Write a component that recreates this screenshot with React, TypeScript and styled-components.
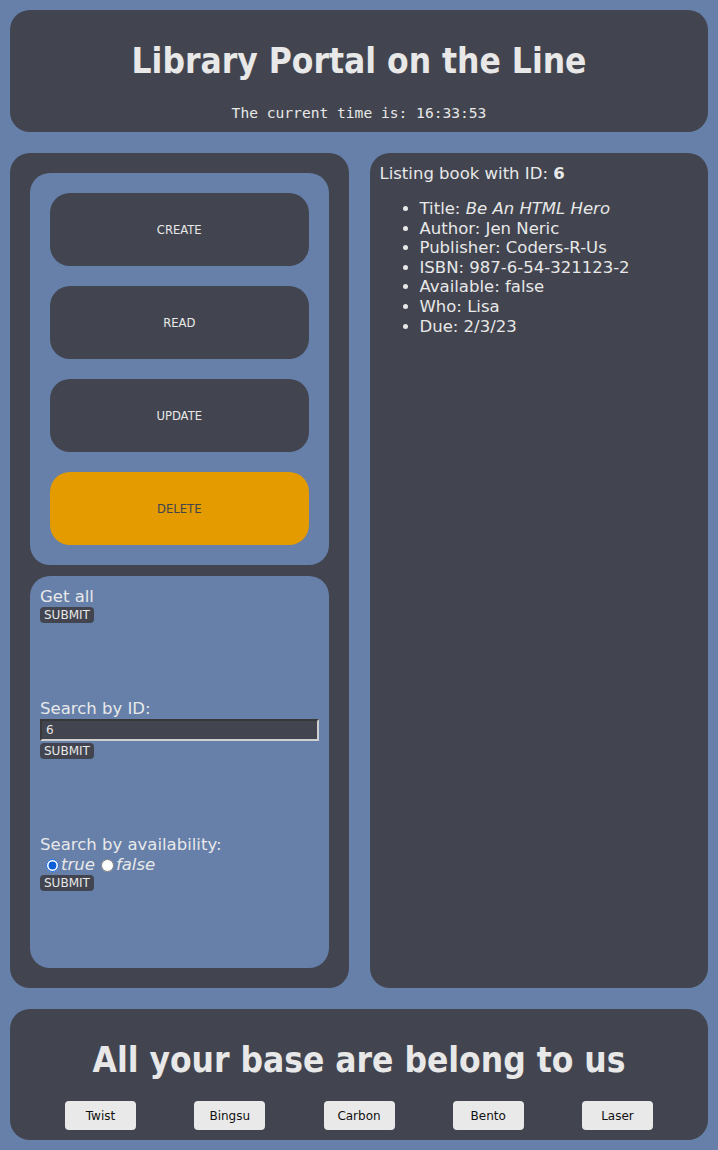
import React from 'react';
import styled, { createGlobalStyle } from 'styled-components';

const GlobalStyle = createGlobalStyle`
  html, body {
    margin: 0;
    padding: 0;
    background: #6680aa;
  }
  body {
    font-family: "DejaVu Sans", Verdana, sans-serif;
    color: #e8e8e8;
  }
`;

const Page = styled.div`
  display: flex;
  flex-direction: column;
  gap: 21px;
  padding: 10px;
  min-height: 1150px;
  box-sizing: border-box;
`;

const Banner = styled.header`
  background: #42454f;
  border-radius: 20px;
  padding: 23px 20px 10px;
  text-align: center;
`;

const BigTitle = styled.h1`
  margin: 0;
  font-family: "DejaVu Sans Condensed", "DejaVu Sans", sans-serif;
  font-size: 35px;
  font-weight: bold;
  line-height: 56px;
`;

const Clock = styled.p`
  margin: 15px 0 0;
  font-family: "DejaVu Sans Mono", "Liberation Mono", monospace;
  font-size: 14.6px;
  line-height: 18px;
`;

const Main = styled.main`
  display: grid;
  grid-template-columns: 1fr 1fr;
  gap: 21px;
`;

const Panel = styled.section<{ $tight?: boolean }>`
  background: #42454f;
  border-radius: 20px;
  padding: ${p => (p.$tight ? '11px 10px' : '20px')};
  display: flex;
  flex-direction: column;
  gap: ${p => (p.$tight ? '0' : '11px')};
`;

const ActionBox = styled.div`
  background: #6680aa;
  border-radius: 20px;
  padding: 20px;
  display: flex;
  flex-direction: column;
  gap: 20px;
`;

const ActionButton = styled.button<{ $danger?: boolean }>`
  height: 73px;
  border: none;
  border-radius: 20px;
  background: ${p => (p.$danger ? '#e39b00' : '#42454f')};
  color: ${p => (p.$danger ? '#42454f' : '#e8e8e8')};
  font-family: inherit;
  font-size: 11.6px;
  cursor: pointer;
`;

const FormBox = styled.div`
  background: #6680aa;
  border-radius: 20px;
  padding: 11px 10px 10px;
  height: 392px;
  box-sizing: border-box;
  display: flex;
  flex-direction: column;
`;

const Form = styled.form`
  display: flex;
  flex-direction: column;
  align-items: flex-start;
  margin-bottom: 76px;
`;

const Label = styled.label`
  font-size: 16.5px;
  line-height: 20px;
`;

const SmallSubmit = styled.button`
  border: none;
  border-radius: 4px;
  background: #42454f;
  color: #e8e8e8;
  font-family: inherit;
  font-size: 12px;
  line-height: 14px;
  padding: 1px 4px;
  cursor: pointer;
`;

const IdInput = styled.input`
  width: 100%;
  box-sizing: border-box;
  height: 22px;
  margin: 0 0 2px;
  background: #42454f;
  color: #e8e8e8;
  border: 2px inset #d0d0d0;
  border-top-color: #8c8c8c;
  border-left-color: #8c8c8c;
  font-family: inherit;
  font-size: 12px;
  padding: 1px 4px;
`;

const RadioRow = styled.div`
  display: flex;
  align-items: center;
  font-size: 16.5px;
  line-height: 20px;
  font-style: italic;
`;

const Radio = styled.input`
  margin: 0 2px 0 6px;
  width: 13px;
  height: 13px;
  accent-color: #0b5fd6;
`;

const Heading = styled.div`
  font-size: 16.5px;
  line-height: 20px;
`;

const Details = styled.ul`
  margin: 15px 0 0;
  padding-left: 40px;
  font-size: 16.5px;
  line-height: 19.6px;
`;

const Footer = styled.footer`
  background: #42454f;
  border-radius: 20px;
  padding: 23px 0 10px;
  text-align: center;
`;

const ThemeRow = styled.div`
  display: flex;
  justify-content: space-between;
  padding: 0 55px;
  margin-top: 13px;
`;

const ThemeButton = styled.button`
  width: 71px;
  height: 29px;
  border: none;
  border-radius: 4px;
  background: #e9e9e9;
  color: #111;
  font-family: inherit;
  font-size: 12px;
  cursor: pointer;
`;

const themes = ['Twist', 'Bingsu', 'Carbon', 'Bento', 'Laser'];

export default function App() {
  const [avail, setAvail] = React.useState('true');

  return (
    <>
      <GlobalStyle />
      <Page>
        <Banner>
          <BigTitle>Library Portal on the Line</BigTitle>
          <Clock>The current time is: 16:33:53</Clock>
        </Banner>

        <Main>
          <Panel>
            <ActionBox>
              <ActionButton>CREATE</ActionButton>
              <ActionButton>READ</ActionButton>
              <ActionButton>UPDATE</ActionButton>
              <ActionButton $danger>DELETE</ActionButton>
            </ActionBox>

            <FormBox>
              <Form onSubmit={e => e.preventDefault()}>
                <Label>Get all</Label>
                <SmallSubmit>SUBMIT</SmallSubmit>
              </Form>

              <Form onSubmit={e => e.preventDefault()}>
                <Label htmlFor="book-id">Search by ID:</Label>
                <IdInput id="book-id" defaultValue="6" />
                <SmallSubmit>SUBMIT</SmallSubmit>
              </Form>

              <Form onSubmit={e => e.preventDefault()}>
                <Label>Search by availability:</Label>
                <RadioRow>
                  <Radio
                    type="radio"
                    name="avail"
                    checked={avail === 'true'}
                    onChange={() => setAvail('true')}
                  />
                  true
                  <Radio
                    type="radio"
                    name="avail"
                    checked={avail === 'false'}
                    onChange={() => setAvail('false')}
                  />
                  false
                </RadioRow>
                <SmallSubmit>SUBMIT</SmallSubmit>
              </Form>
            </FormBox>
          </Panel>

          <Panel $tight>
            <Heading>
              Listing book with ID: <b>6</b>
            </Heading>
            <Details>
              <li>
                Title: <i>Be An HTML Hero</i>
              </li>
              <li>Author: Jen Neric</li>
              <li>Publisher: Coders-R-Us</li>
              <li>ISBN: 987-6-54-321123-2</li>
              <li>Available: false</li>
              <li>Who: Lisa</li>
              <li>Due: 2/3/23</li>
            </Details>
          </Panel>
        </Main>

        <Footer>
          <BigTitle>All your base are belong to us</BigTitle>
          <ThemeRow>
            {themes.map(t => (
              <ThemeButton key={t}>{t}</ThemeButton>
            ))}
          </ThemeRow>
        </Footer>
      </Page>
    </>
  );
}
